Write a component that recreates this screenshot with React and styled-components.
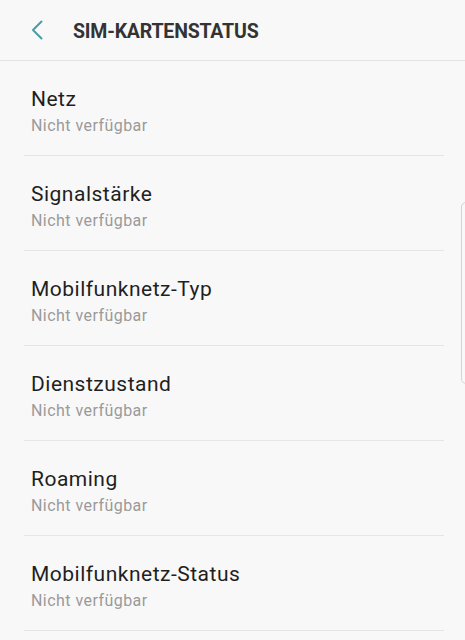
import React from "react";
import styled, { createGlobalStyle } from "styled-components";

const Global = createGlobalStyle`
  html, body { margin: 0; padding: 0; background: #f8f8f8; }
  body { font-family: Roboto, "Noto Sans", sans-serif; }
`;

const Screen = styled.div`
  position: relative;
  width: 465px;
  height: 640px;
  overflow: hidden;
  background: #f8f8f8;
`;

const Header = styled.header`
  display: flex;
  align-items: center;
  height: 61px;
  border-bottom: 1px solid #e2e2e2;
  box-sizing: border-box;
  padding-left: 27px;
`;

const BackButton = styled.button`
  display: flex;
  align-items: center;
  justify-content: center;
  width: 20px;
  height: 24px;
  padding: 0;
  border: none;
  background: none;
  margin-right: 26px;
`;

const Title = styled.h1`
  margin: 0;
  font-family: Roboto, sans-serif;
  font-weight: 700;
  font-size: 19.5px;
  letter-spacing: -0.2px;
  color: #333333;
  padding-top: 3px;
`;

const List = styled.ul`
  list-style: none;
  margin: 0;
  padding: 0 21px 0 24px;
`;

const Item = styled.li`
  display: flex;
  flex-direction: column;
  justify-content: center;
  height: 95px;
  box-sizing: border-box;
  padding: 6px 0 0 7px;
  border-bottom: 1px solid #e6e6e6;
`;

const ItemTitle = styled.div`
  font-size: 21px;
  letter-spacing: 0.5px;
  color: #1f1f1f;
  line-height: 26px;
`;

const ItemSub = styled.div`
  font-size: 16px;
  letter-spacing: 0.45px;
  color: #9a9a9a;
  line-height: 20px;
  margin-top: 4px;
`;

const ScrollIndicator = styled.div`
  position: absolute;
  top: 202px;
  right: -6px;
  width: 10px;
  height: 182px;
  border: 1px solid #d4d4d4;
  border-radius: 6px;
  box-sizing: border-box;
`;

const items = [
  "Netz",
  "Signalstärke",
  "Mobilfunknetz-Typ",
  "Dienstzustand",
  "Roaming",
  "Mobilfunknetz-Status",
];

export default function App() {
  return (
    <>
      <Global />
      <Screen>
        <Header>
          <BackButton aria-label="Zurück">
            <svg width="14" height="20" viewBox="0 0 14 20">
              <path d="M11.5 1.5 L3 10 L11.5 18.5" fill="none" stroke="#4d9aa9" strokeWidth="2" strokeLinecap="round" strokeLinejoin="round" />
            </svg>
          </BackButton>
          <Title>SIM-KARTENSTATUS</Title>
        </Header>
        <List>
          {items.map((t) => (
            <Item key={t}>
              <ItemTitle>{t}</ItemTitle>
              <ItemSub>Nicht verfügbar</ItemSub>
            </Item>
          ))}
        </List>
        <ScrollIndicator />
      </Screen>
    </>
  );
}
